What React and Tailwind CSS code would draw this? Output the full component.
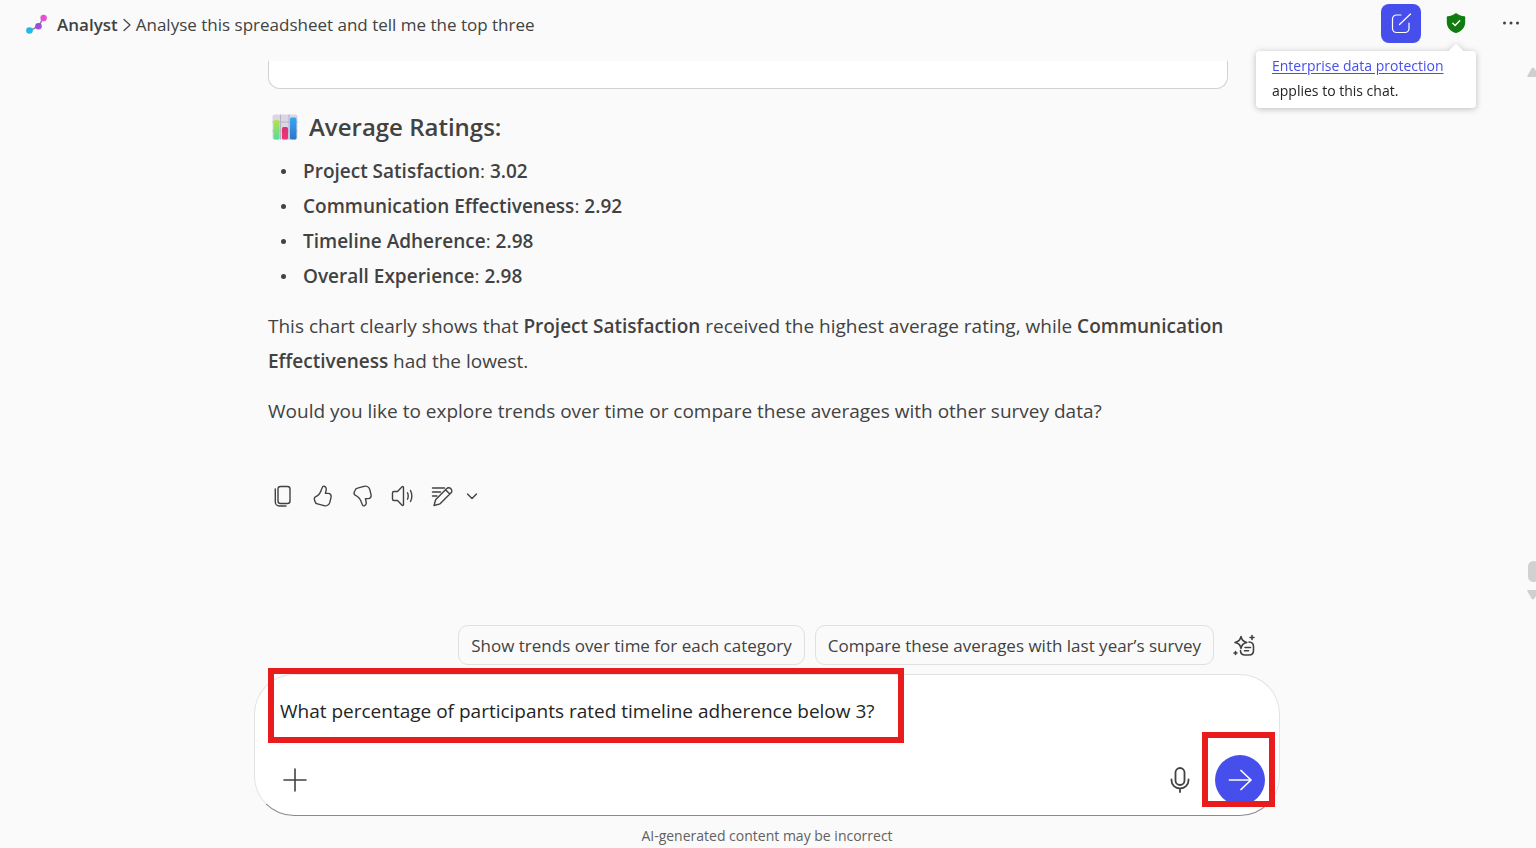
import React from "react";

function Icon({ className = "size-6", children, viewBox = "0 0 24 24", width = 1.4 }) {
  return (
    <svg
      className={className}
      viewBox={viewBox}
      fill="none"
      stroke="currentColor"
      strokeWidth={width}
      strokeLinecap="round"
      strokeLinejoin="round"
      aria-hidden="true"
    >
      {children}
    </svg>
  );
}

function AnalystLogo() {
  return (
    <svg className="h-6 w-6 shrink-0" viewBox="0 0 24 24" aria-hidden="true">
      <defs>
        <linearGradient id="dotA" x1="0" y1="0" x2="1" y2="1">
          <stop offset="0" stopColor="#1fb0ee" />
          <stop offset="1" stopColor="#1fc4e0" />
        </linearGradient>
        <linearGradient id="dotB" x1="0" y1="0" x2="1" y2="1">
          <stop offset="0" stopColor="#7f4bd8" />
          <stop offset="1" stopColor="#b64fe0" />
        </linearGradient>
      </defs>
      <path d="M4 17.500 12.500 13.200 17.500 5" fill="none" stroke="#8b8b95" strokeWidth="1.500" />
      <circle cx="3.500" cy="17.500" r="3.300" fill="url(#dotA)" />
      <circle cx="12.500" cy="13.200" r="3.300" fill="url(#dotB)" />
      <circle cx="17.600" cy="5" r="3.200" fill="#e750d3" />
    </svg>
  );
}

function ChartEmoji() {
  return (
    <svg className="size-[26px]" viewBox="0 0 26 26" aria-hidden="true">
      <defs>
        <linearGradient id="barGreen" x1="0" y1="0" x2="0" y2="1">
          <stop offset="0" stopColor="#b3e24a" />
          <stop offset="1" stopColor="#55dd9c" />
        </linearGradient>
        <linearGradient id="barPink" x1="0" y1="0" x2="0" y2="1">
          <stop offset="0" stopColor="#d9316f" />
          <stop offset="1" stopColor="#f5327c" />
        </linearGradient>
        <linearGradient id="barBlue" x1="0" y1="0" x2="0" y2="1">
          <stop offset="0" stopColor="#35a8f4" />
          <stop offset="1" stopColor="#3273c8" />
        </linearGradient>
      </defs>
      <rect x="0.500" y="0.500" width="25" height="25" rx="2" fill="#dcd5e4" />
      <path d="M.5 8h25M.5 17h25M8.500 .5v25M17 .5v25" stroke="#b9b0c6" strokeWidth="1" />
      <rect x="1.500" y="6" width="6" height="19.500" rx="1.500" fill="url(#barGreen)" />
      <rect x="10" y="13" width="6" height="12.500" rx="1.500" fill="url(#barPink)" />
      <rect x="18" y="3.500" width="6.500" height="22" rx="1.500" fill="url(#barBlue)" />
    </svg>
  );
}

function Header() {
  return (
    <header className="flex h-[46px] shrink-0 items-center justify-between pr-[13px] pl-[26px]">
      <nav aria-label="Breadcrumb" className="flex items-center pt-[3px] text-[17px]">
        <AnalystLogo />
        <span className="ml-[7px] font-semibold">Analyst</span>
        <Icon className="mx-[3px] h-4 w-3" viewBox="0 0 12 16" width={1.2}>
          <path d="M3 2.500l6 5.500L3 13.500" />
        </Icon>
        <span>Analyse this spreadsheet and tell me the top three</span>
      </nav>
      <div className="flex items-center">
        <button
          type="button"
          aria-label="New chat"
          className="flex h-[39px] w-10 items-center justify-center rounded-lg bg-[#464feb] text-white"
        >
          <Icon className="size-6" width={1.2}>
            <path d="M12 4H7.500A4 4 0 0 0 3.500 8v9.500a4 4 0 0 0 4 4H16a4 4 0 0 0 4-4V12" />
            <path d="M10.500 13.500 21.500 3" />
          </Icon>
        </button>
        <div className="relative ml-[23px] flex">
          <button type="button" aria-label="Data protection" className="flex size-6 items-center justify-center">
            <svg className="size-6" viewBox="0 0 24 24" aria-hidden="true">
              <path
                d="M12 2c2.500 2 5.200 3 8.300 3.200.5 0 .9.400.9.900V11c0 5.200-3 8.900-8.900 11.100-.2.100-.4.100-.6 0C5.800 19.900 2.800 16.200 2.800 11V6.100c0-.5.400-.9.900-.9C6.800 5 9.500 4 12 2Z"
                fill="#107c10"
              />
              <path d="m8.800 12.200 2.300 2.200 4.600-4.600" fill="none" stroke="#fff" strokeWidth="1.400" strokeLinecap="round" />
            </svg>
          </button>
          <div
            role="tooltip"
            className="absolute top-10 -right-2 z-10 w-[220px] rounded bg-white pt-[2px] pr-2 pb-[5px] pl-4 text-[14px] leading-[25px] text-[#242424] drop-shadow-[0_1px_3px_rgba(0,0,0,0.25)]"
          >
            <span className="absolute -top-[5px] right-[14px] size-3 rotate-45 bg-white" />
            <a href="#protection" className="text-[#464feb] underline underline-offset-2">
              Enterprise data protection
            </a>
            <br />
            applies to this chat.
          </div>
        </div>
        <button type="button" aria-label="More options" className="ml-[31px] flex size-6 items-center justify-center">
          <svg className="size-5" viewBox="0 0 20 20" fill="currentColor" aria-hidden="true">
            <circle cx="3.500" cy="10" r="1.500" />
            <circle cx="10" cy="10" r="1.500" />
            <circle cx="16.500" cy="10" r="1.500" />
          </svg>
        </button>
      </div>
    </header>
  );
}

const ratings = [
  ["Project Satisfaction", "3.02"],
  ["Communication Effectiveness", "2.92"],
  ["Timeline Adherence", "2.98"],
  ["Overall Experience", "2.98"],
];

function ActionButton({ label, children }) {
  return (
    <button type="button" aria-label={label} className="flex size-10 items-center justify-center">
      {children}
    </button>
  );
}

function Actions() {
  return (
    <div className="mt-[47px] -ml-[6px] flex items-center">
      <ActionButton label="Copy">
        <Icon>
          <rect x="8" y="2.500" width="12" height="17" rx="2.500" />
          <path d="M5.300 5V18a4 4 0 0 0 4 4H16" />
        </Icon>
      </ActionButton>
      <ActionButton label="Like">
        <Icon>
          <path d="M14.200 2.200c1.700.4 2.400 2.200 1.900 4.300l-.7 2.900h2.800c2 0 3.300 1.800 2.900 3.700l-1.300 5.300c-.7 2.500-3.300 4-5.800 3.300l-6.500-1.800c-1.300-.3-2.300-1.300-2.600-2.600l-.5-1.800c-.3-1.200.3-2.300 1.400-2.800 3-1.300 4.500-3.700 5.500-6.600.5-1.300.9-2.700 1.500-3.500.4-.4.900-.5 1.400-.4Z" />
        </Icon>
      </ActionButton>
      <ActionButton label="Dislike">
        <Icon>
          <path d="M14.200 21.800c1.700-.4 2.400-2.200 1.900-4.300l-.7-2.900h2.800c2 0 3.300-1.800 2.900-3.700l-1.300-5.300c-.7-2.500-3.300-4-5.800-3.300L7.500 4.100c-1.300.3-2.300 1.300-2.600 2.600l-.8 1.800c-.3 1.200.3 2.300 1.400 2.800 3 1.300 4.800 3.700 5.800 6.600.5 1.300.9 2.700 1.500 3.500.4.400.9.500 1.400.4Z" />
        </Icon>
      </ActionButton>
      <ActionButton label="Read aloud">
        <Icon>
          <path d="M13.500 3.500v17c0 .8-.8 1.200-1.400.7L7.500 16.500H4c-.9 0-1.500-.6-1.500-1.500V9c0-.9.600-1.500 1.500-1.500h3.500l4.600-4.700c.6-.5 1.400-.1 1.400.7Z" />
          <path d="M17.500 8.800c.9 2 .9 4.400 0 6.400M20.500 6.500c1.700 3.400 1.700 7.600 0 11" />
        </Icon>
      </ActionButton>
      <ActionButton label="Edit">
        <Icon>
          <path d="M2.500 4h12M2.500 8h8M2.500 12h4.500" />
          <path d="M16.500 4.700 6.300 14.900c-.4.400-.7.900-.8 1.400L4 21.500l5.200-1.400c.5-.1 1-.4 1.400-.8L20.800 9.100M16.500 4.700c1.200-1.200 3.200-1.200 4.400 0 1.200 1.200 1.200 3.200 0 4.400M15.500 5.800l4.300 4.300" />
        </Icon>
      </ActionButton>
      <button type="button" aria-label="More edit options" className="flex h-10 w-5 items-center justify-center">
        <Icon className="size-4 shrink-0" viewBox="0 0 16 16">
          <path d="m3.500 6 4.500 4.500L12.500 6" />
        </Icon>
      </button>
    </div>
  );
}

function Scrollbar() {
  return (
    <div aria-hidden="true" className="flex w-[9px] shrink-0 flex-col overflow-hidden pt-[6px] pb-[5px]">
      <svg className="h-[10px] w-3 shrink-0" viewBox="0 0 12 10">
        <path d="M6 .5Q7 .5 7.500 1.500L12 9Q12 10 11 10H1Q0 10 .5 8.500L4.500 1.500Q5 .5 6 .5Z" fill="#cfcfcf" />
      </svg>
      <div className="flex-1" />
      <div className="ml-px h-[21px] w-[11px] shrink-0 rounded-md bg-[#d1d1d1]" />
      <svg className="mt-[8px] h-[10px] w-3 shrink-0" viewBox="0 0 12 10">
        <path d="M6 9.500Q7 9.500 7.500 8.500L12 1Q12 0 11 0H1Q0 0 .5 1.500L4.500 8.500Q5 9.500 6 9.500Z" fill="#cfcfcf" />
      </svg>
    </div>
  );
}

function Conversation() {
  return (
    <div className="mt-[15px] flex min-h-0 flex-1 overflow-hidden">
      <main className="flex-1 overflow-hidden pr-[31px]">
        <article className="mx-auto w-full max-w-[960px] text-[19px] leading-[35px]">
          <div className="h-7 rounded-b-xl border border-t-0 border-[#d1d1d1] bg-white" />
          <h2 className="mt-5 flex items-center gap-[11px] pl-1 text-[24px] font-semibold">
            <ChartEmoji />
            Average Ratings:
          </h2>
          <ul className="mt-[10px] pl-[13px]">
            {ratings.map(([name, score]) => (
              <li key={name} className="flex items-center">
                <span className="mr-[17px] size-[5px] rounded-full bg-[#424242]" />
                <span>
                  <strong className="font-semibold">{name}</strong>: <strong className="font-semibold">{score}</strong>
                </span>
              </li>
            ))}
          </ul>
          <p className="mt-[15px]">
            This chart clearly shows that <strong className="font-semibold">Project Satisfaction</strong> received the
            highest average rating, while <strong className="font-semibold">Communication Effectiveness</strong> had the
            lowest.
          </p>
          <p className="mt-[15px]">
            Would you like to explore trends over time or compare these averages with other survey data?
          </p>
          <Actions />
        </article>
      </main>
      <Scrollbar />
    </div>
  );
}

function Suggestion({ children }) {
  return (
    <button type="button" className="h-10 rounded-[10px] border border-[#e0e0e0] px-3 pt-[2px] text-[17px]">
      {children}
    </button>
  );
}

function Composer() {
  return (
    <form
      onSubmit={(e) => e.preventDefault()}
      className="relative mt-[9px] flex h-[142px] flex-col justify-between rounded-[40px] border border-[#e3e3e3] border-b-[#8a8a8a] bg-white"
    >
      <input
        aria-label="Message"
        type="text"
        defaultValue="What percentage of participants rated timeline adherence below 3?"
        className="mt-5 mr-6 ml-[25px] h-8 bg-transparent text-[19px] text-[#242424] outline-none"
      />
      <div className="flex items-center justify-between pr-[14px] pb-[10px] pl-7">
        <button type="button" aria-label="Add content">
          <Icon width={1.6}>
            <path d="M12 1v22M1 12h22" />
          </Icon>
        </button>
        <div className="flex items-center gap-[23px]">
          <button type="button" aria-label="Dictate">
            <Icon className="h-7 w-6" viewBox="0 0 24 28" width={1.8}>
              <rect x="7.500" y="2" width="9" height="17" rx="4.500" />
              <path d="M3.500 13.500v1a8.500 8 0 0 0 17 0v-1M12 22.500V26" />
            </Icon>
          </button>
          <button
            type="submit"
            aria-label="Send"
            className="flex size-[50px] items-center justify-center rounded-full bg-[#464feb] text-white"
          >
            <Icon width={1.7}>
              <path d="M1.500 12H23M13 2.500l10 9.500-10 9.500" />
            </Icon>
          </button>
        </div>
      </div>
      <span className="pointer-events-none absolute -top-[7px] left-[13px] h-[75px] w-[636px] border-6 border-[#e81c1c]" />
      <span className="pointer-events-none absolute right-1 bottom-2 h-[75px] w-[73px] border-6 border-[#e81c1c]" />
    </form>
  );
}

export default function App() {
  return (
    <div className="flex h-screen flex-col overflow-hidden bg-[#fafafa] font-['Open_Sans','Noto_Sans',sans-serif] text-[#424242]">
      <Header />
      <Conversation />
      <footer className="mt-5 shrink-0 pr-[2px]">
        <div className="mx-auto w-full max-w-[1026px]">
          <div className="flex items-center justify-end gap-[10px] pr-6">
            <Suggestion>Show trends over time for each category</Suggestion>
            <Suggestion>Compare these averages with last year’s survey</Suggestion>
            <button type="button" aria-label="More prompts" className="ml-2">
              <Icon width={1.6}>
                <path d="M9 3.500c.9 3.700 2 4.800 5.800 5.900-3.800 1.100-4.900 2.200-5.800 6-.9-3.800-2-4.900-6-6 4-1.100 5.100-2.200 6-5.900Z" />
                <path d="M17 9c3 .2 4.500 1.600 4.500 4.500v4c0 3-1.500 4.500-4.500 4.500h-4c-3 0-4.500-1.500-4.500-4.500M13 14.500h5.500M12.500 17.700h4M20 2.500v4M18 4.500h4M3.500 18.500v3M2 20h3" />
              </Icon>
            </button>
          </div>
          <Composer />
          <p className="mt-[10px] pb-[2px] text-center text-[14px] leading-5 text-[#616161]">
            AI-generated content may be incorrect
          </p>
        </div>
      </footer>
    </div>
  );
}
